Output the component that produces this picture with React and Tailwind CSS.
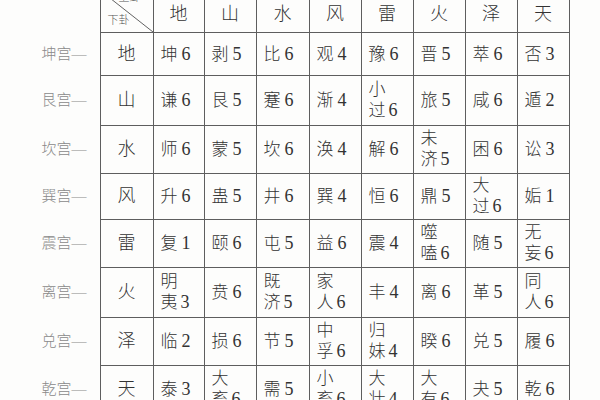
const upper = ["地", "山", "水", "风", "雷", "火", "泽", "天"];

const rows = [
  { palace: "坤宫", lower: "地", cells: [["坤", 6], ["剥", 5], ["比", 6], ["观", 4], ["豫", 6], ["晋", 5], ["萃", 6], ["否", 3]], h: "h-[43px]" },
  { palace: "艮宫", lower: "山", cells: [["谦", 6], ["艮", 5], ["蹇", 6], ["渐", 4], ["小过", 6], ["旅", 5], ["咸", 6], ["遁", 2]], h: "h-[50px]" },
  { palace: "坎宫", lower: "水", cells: [["师", 6], ["蒙", 5], ["坎", 6], ["涣", 4], ["解", 6], ["未济", 5], ["困", 6], ["讼", 3]], h: "h-[48px]" },
  { palace: "巽宫", lower: "风", cells: [["升", 6], ["蛊", 5], ["井", 6], ["巽", 4], ["恒", 6], ["鼎", 5], ["大过", 6], ["姤", 1]], h: "h-[46px]" },
  { palace: "震宫", lower: "雷", cells: [["复", 1], ["颐", 6], ["屯", 5], ["益", 6], ["震", 4], ["噬嗑", 6], ["随", 5], ["无妄", 6]], h: "h-[48px]" },
  { palace: "离宫", lower: "火", cells: [["明夷", 3], ["贲", 6], ["既济", 5], ["家人", 6], ["丰", 4], ["离", 6], ["革", 5], ["同人", 6]], h: "h-[50px]" },
  { palace: "兑宫", lower: "泽", cells: [["临", 2], ["损", 6], ["节", 5], ["中孚", 6], ["归妹", 4], ["睽", 6], ["兑", 5], ["履", 6]], h: "h-[48px]" },
  { palace: "乾宫", lower: "天", cells: [["泰", 3], ["大畜", 6], ["需", 5], ["小畜", 6], ["大壮", 4], ["大有", 6], ["夬", 5], ["乾", 6]], h: "h-[48px]" },
];

const Entry = ({ name, num }) => {
  if (name.length === 2) {
    return (
      <div className="flex flex-col leading-[20px]">
        <span>{name[0]}</span>
        <span>
          {name[1]}
          <span className="ml-[3px] text-[18px]">{num}</span>
        </span>
      </div>
    );
  }
  return (
    <span>
      {name}
      <span className="ml-[4px] text-[18px]">{num}</span>
    </span>
  );
};

const App = () => {
  return (
    <div
      className="h-[400px] w-[600px] overflow-hidden bg-[#fdfdfc] text-[#333]"
      style={{ fontFamily: '"Liberation Serif", "Noto Sans CJK SC", serif' }}
    >
      <table className="-mt-[10px] table-fixed border-collapse">
        <colgroup>
          <col className="w-[100px]" />
          <col className="w-[53px]" />
          <col className="w-[51px]" />
          <col className="w-[52px]" />
          <col className="w-[53px]" />
          <col className="w-[52px]" />
          <col className="w-[52px]" />
          <col className="w-[52px]" />
          <col className="w-[52px]" />
          <col className="w-[52px]" />
        </colgroup>
        <tbody>
          <tr className="h-[42px]">
            <td />
            <td className="relative border border-[#5e5e5e] p-0">
              <svg className="absolute inset-0 h-full w-full" viewBox="0 0 53 42" preserveAspectRatio="none">
                <line x1="0" y1="0" x2="53" y2="42" stroke="#5e5e5e" strokeWidth="1" />
              </svg>
              <span className="absolute right-[12px] top-[-2px] text-[11px] font-light text-[#555]">上卦</span>
              <span className="absolute bottom-[4px] left-[7px] text-[11px] font-light text-[#555]">下卦</span>
            </td>
            {upper.map((u) => (
              <td key={u} className="border border-[#5e5e5e] pt-[6px] text-center text-[18px] font-light">
                {u}
              </td>
            ))}
          </tr>
          {rows.map((row) => (
            <tr key={row.palace} className={row.h}>
              <td className="pr-[13px] text-right text-[15px] font-light text-[#8a8a8a]">
                {row.palace}—
              </td>
              <td className="border border-[#5e5e5e] text-center text-[18px] font-light">{row.lower}</td>
              {row.cells.map(([name, num]) => (
                <td key={name} className="border border-[#5e5e5e] pl-[7px] text-left text-[17px] font-light">
                  <Entry name={name} num={num} />
                </td>
              ))}
            </tr>
          ))}
        </tbody>
      </table>
    </div>
  );
};

export default App;
